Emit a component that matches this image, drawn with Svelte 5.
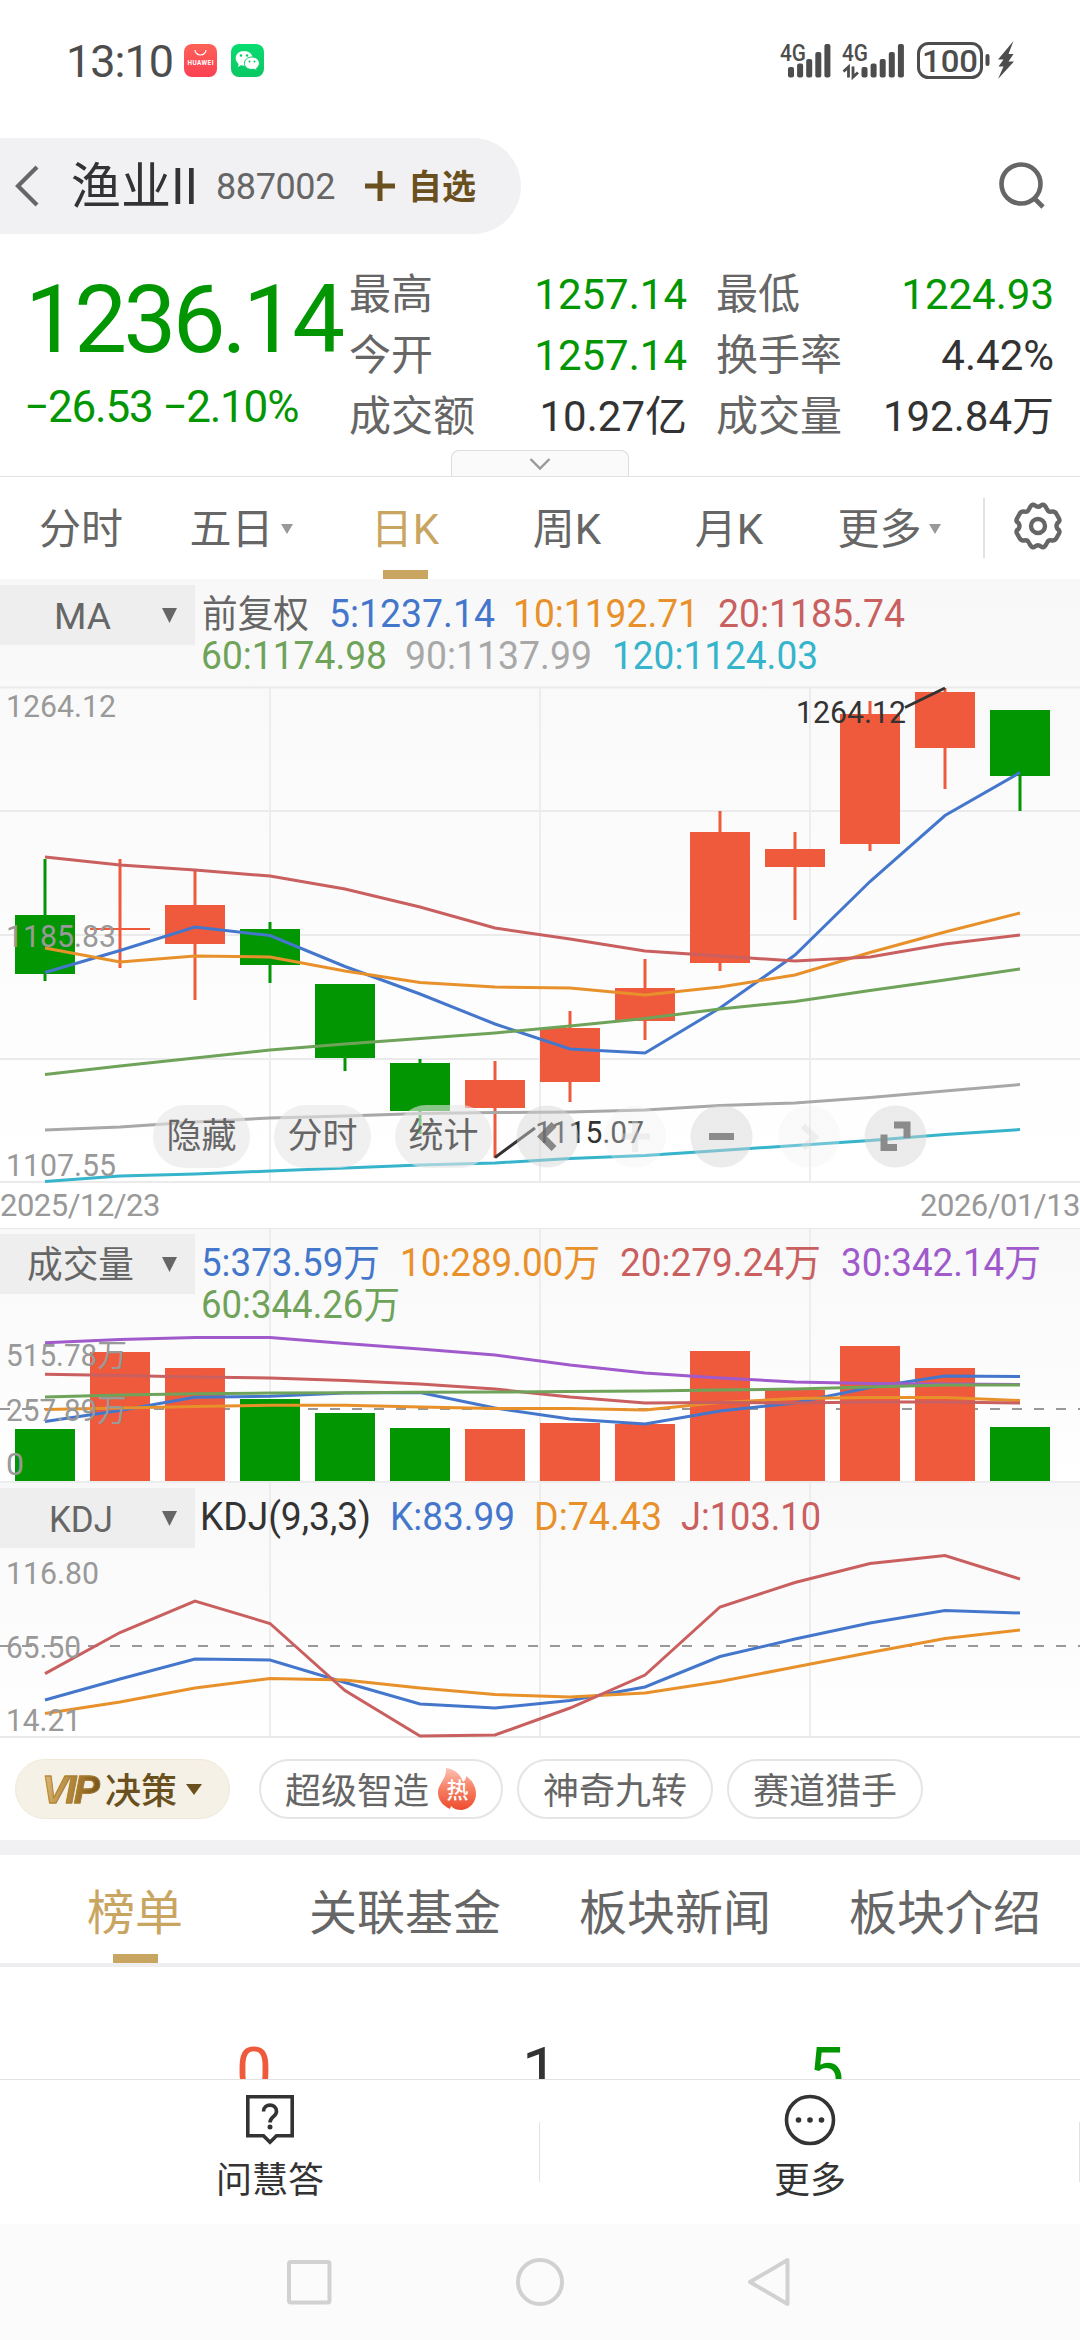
<script>
const UP = '#ef5a3c';
const DOWN = '#029702';
const BLUE = '#4477cc';
const ORANGE = '#e8912b';
const RED = '#c95f5f';
const GREEN = '#6fa35a';
const GRAY = '#a8a8a8';
const CYAN = '#35b4cb';
const PURPLE = '#a05acb';

const stats = [
  { label: '最高', value: '1257.14', down: true },
  { label: '最低', value: '1224.93', down: true },
  { label: '今开', value: '1257.14', down: true },
  { label: '换手率', value: '4.42%' },
  { label: '成交额', value: '10.27亿' },
  { label: '成交量', value: '192.84万' }
];

const periods = [
  { name: '分时' },
  { name: '五日', more: true },
  { name: '日K', active: true },
  { name: '周K' },
  { name: '月K' },
  { name: '更多', more: true }
];

// [high, open/close top, open/close bottom, low, rising]
const candles = [
  [859, 915, 974, 981, false],
  [859, 928, 930, 968, true],
  [870, 905, 944, 1000, true],
  [922, 929, 965, 983, false],
  [984, 984, 1058, 1071, false],
  [1059, 1063, 1111, 1134, false],
  [1061, 1080, 1108, 1158, true],
  [1011, 1028, 1082, 1102, true],
  [959, 988, 1021, 1040, true],
  [811, 832, 963, 971, true],
  [832, 849, 867, 920, true],
  [701, 714, 844, 851, true],
  [688, 692, 748, 789, true],
  [710, 710, 776, 811, false]
];

const maLines = [
  { color: BLUE, ys: [972.5, 950.5, 927, 935.5, 966.5, 994, 1024, 1049, 1053, 1008, 955, 881.5, 815.5, 772.5] },
  { color: ORANGE, ys: [948, 962, 956, 957, 971, 982.5, 987, 988, 995, 987, 975, 952.5, 932, 913] },
  { color: RED, ys: [857, 865, 870, 876, 889, 907, 928, 939, 951, 956, 961, 957, 944, 935] },
  { color: GREEN, ys: [1074.5, 1066, 1058, 1050, 1044, 1038.5, 1033, 1026, 1018.5, 1009, 1001.5, 990.5, 980, 969] },
  { color: GRAY, ys: [1130, 1127, 1122, 1118, 1116, 1113.5, 1112.5, 1112, 1110, 1105.5, 1103, 1097.5, 1091, 1084.5] },
  { color: CYAN, ys: [1181.5, 1176, 1174, 1171, 1168, 1165, 1163, 1158.5, 1155.5, 1150.5, 1145.5, 1140.5, 1134.5, 1129.5] }
];

const volumes = [1429, 1352, 1368, 1399, 1413, 1428, 1429, 1423, 1424, 1351, 1390, 1346, 1368, 1427];

const volLines = [
  { color: BLUE, ys: [1421.5, 1410.5, 1397.3, 1396.3, 1393, 1392.5, 1408, 1419, 1424, 1411, 1403, 1387.5, 1376, 1376.6] },
  { color: ORANGE, ys: [1409.5, 1408, 1406.5, 1405.3, 1405.3, 1407, 1408.5, 1408.5, 1410, 1402.5, 1398.5, 1397.5, 1397.5, 1400.5] },
  { color: RED, ys: [1374.3, 1375.5, 1377, 1378, 1380.5, 1384, 1389, 1397, 1403, 1402.5, 1403, 1402, 1402, 1403] },
  { color: PURPLE, ys: [1342.7, 1339.5, 1337.5, 1337.5, 1343.5, 1349, 1355, 1365, 1373, 1378, 1382, 1383.5, 1384, 1384.6] },
  { color: GREEN, ys: [1397, 1395, 1393.7, 1393, 1392.7, 1392.3, 1392, 1391.5, 1391, 1390, 1389, 1387, 1385, 1385] }
];

const kdjLines = [
  { color: BLUE, ys: [1700, 1679, 1659, 1660, 1682.5, 1704, 1708, 1700.5, 1687, 1656.5, 1639, 1623, 1610.5, 1613] },
  { color: ORANGE, ys: [1713.5, 1702, 1688, 1678.5, 1680, 1688, 1694.5, 1697, 1693, 1681.5, 1667, 1652.5, 1638.5, 1630] },
  { color: RED, ys: [1673.6, 1632.5, 1601, 1623.5, 1690.5, 1736, 1735, 1708, 1675, 1607, 1582.5, 1563.5, 1555.5, 1579] }
];

// text, x, baseline, width, color
const maLegend = [
  ['前复权', 202, 627, 107, '#666'],
  ['5:1237.14', 329, 627, 166, BLUE],
  ['10:1192.71', 513, 627, 186, ORANGE],
  ['20:1185.74', 718, 627, 187, RED],
  ['60:1174.98', 201, 669, 186, GREEN],
  ['90:1137.99', 405, 669, 187, GRAY],
  ['120:1124.03', 612, 669, 206, CYAN]
];

const volLegend = [
  ['5:373.59万', 201, 1276, 179, BLUE],
  ['10:289.00万', 400, 1276, 200, ORANGE],
  ['20:279.24万', 620, 1276, 201, RED],
  ['30:342.14万', 841, 1276, 200, PURPLE],
  ['60:344.26万', 201, 1318, 199, GREEN]
];

const kdjLegend = [
  ['KDJ(9,3,3)', 200, 1530, 171, '#333'],
  ['K:83.99', 390, 1530, 125, BLUE],
  ['D:74.43', 534, 1530, 128, ORANGE],
  ['J:103.10', 681, 1530, 140, RED]
];

const tools = ['隐藏', '分时', '统计'];
const chips = [{ name: '超级智造', hot: true }, { name: '神奇九转' }, { name: '赛道猎手' }];
const sections = ['榜单', '关联基金', '板块新闻', '板块介绍'];

const cx = (i) => 45 + i * 75;
const toPoints = (ys) => ys.map((y, i) => `${cx(i)},${y}`).join(' ');
</script>

{#snippet legend(items)}
  {#each items as [text, x, y, width, color]}
    <text {x} {y} fill={color} font-size="38" textLength={width} lengthAdjust="spacingAndGlyphs">{text}</text>
  {/each}
{/snippet}

{#snippet curves(lines)}
  {#each lines as line}
    <polyline points={toPoints(line.ys)} fill="none" stroke={line.color} stroke-width="3" />
  {/each}
{/snippet}

{#snippet axis(text, y, width, x = 6)}
  <text {x} {y} fill="#999" font-size="31" textLength={width} lengthAdjust="spacingAndGlyphs">{text}</text>
{/snippet}

{#snippet picker(name, y, x, width)}
  <rect x="0" {y} width="195" height="60" fill="#eee" />
  <text {x} y={y + 44} fill="#666" font-size="37" textLength={width} lengthAdjust="spacingAndGlyphs">{name}</text>
  <path d={`M162 ${y + 23}h15l-7.5 15z`} fill="#666" />
{/snippet}

{#snippet columns(top, bottom)}
  {#each [270, 540, 810] as x}
    <line x1={x} x2={x} y1={top} y2={bottom} stroke="#ededed" stroke-width="2" />
  {/each}
{/snippet}

<div class="screen">
  <div class="status">
    <span class="clock">13:10</span>
    <svg class="badges" viewBox="0 0 80 34" width="80" height="34">
      <defs>
        <linearGradient id="hw" x2="0" y2="1"><stop stop-color="#fd6257" /><stop offset="1" stop-color="#fb4154" /></linearGradient>
        <linearGradient id="wx" x2="0" y2="1"><stop stop-color="#07dd70" /><stop offset="1" stop-color="#0bc763" /></linearGradient>
      </defs>
      <rect width="33" height="33" rx="8" fill="url(#hw)" />
      <path d="M11 6a5.5 5 0 0 0 11 0" fill="none" stroke="#fff" stroke-width="1.2" />
      <text x="3.5" y="21" font-size="6.4" font-weight="700" fill="#fff" textLength="26">HUAWEI</text>
      <rect x="47" width="33" height="33" rx="8" fill="url(#wx)" />
      <path d="M60 7c-5 0-8.300 3.200-8.300 7.300 0 2.400 1.200 4.400 3 5.700l-.8 3 3-1.700c1 .3 2 .4 3.100.4 5 0 8.700-3.300 8.700-7.400S65 7 60 7z" fill="#fff" />
      <path d="M68 13c-4.600 0-7.600 2.900-7.600 6.300s3 6.200 7.600 6.200l2.300-.3 2.800 1.600-.6-2.600c1.800-1.200 2.900-2.900 2.900-4.900 0-3.400-3-6.300-7.400-6.300z" fill="#fff" stroke="#0acd67" stroke-width="1" />
      <circle cx="57" cy="11.500" r="1.200" fill="#0c6" /><circle cx="63" cy="11.500" r="1.200" fill="#0c6" />
      <circle cx="65.500" cy="17.500" r="1" fill="#0c6" /><circle cx="70.500" cy="17.500" r="1" fill="#0c6" />
    </svg>
    <svg class="signals" viewBox="776 38 240 44" width="240" height="44" fill="#4d4d4d">
      {#each [0, 73.500] as dx, n}
        <text x={778 + n * 62} y="59.500" font-size="23" font-weight="500" textLength="26" lengthAdjust="spacingAndGlyphs">4G</text>
        {#each [66, 62.500, 58, 51, 43] as top, i}
          <rect x={786 + dx + i * 9.100} y={top} width="6" height={76.500 - top} rx="2" />
        {/each}
      {/each}
      <path d="M841.500 70.500l5-4.500v10.500M856 71.500l-5 4.500v-10.500" fill="none" stroke="#4d4d4d" stroke-width="2.800" />
      <rect x="916.500" y="42.500" width="63" height="34" rx="10" fill="none" stroke="#4d4d4d" stroke-width="3" />
      <text x="920" y="71" font-size="32" font-weight="500" textLength="56" lengthAdjust="spacingAndGlyphs">100</text>
      <rect x="983.500" y="53" width="4" height="12" rx="2" />
      <path d="M1011.500 40l-15.500 18.500h5.500l-5 7h5L996 78l16-17.500h-5.500l5-7.500h-5z" />
    </svg>
  </div>

  <header>
    <div class="title-pill">
      <svg class="back" viewBox="0 0 26 42" width="26" height="42"><path d="M23 2L4 21l19 19" fill="none" stroke="#666" stroke-width="4.200" /></svg>
      <h1>渔业II</h1>
      <span class="code">887002</span>
      <svg class="plus" viewBox="0 0 32 32" width="32" height="32"><path d="M16 1v30M1 16h30" stroke="#69501e" stroke-width="5" /></svg>
      <span class="follow">自选</span>
    </div>
    <svg class="search" viewBox="0 0 50 50" width="50" height="50" fill="none" stroke="#666" stroke-width="4.600"><circle cx="23" cy="23" r="19.500" /><path d="M36 37l9 9" /></svg>
  </header>

  <div class="quote">
    <div class="price">
      <strong>1236.14</strong>
      <span>−26.53 −2.10%</span>
    </div>
    <div class="stats">
      {#each stats as s}
        <div class="stat"><span>{s.label}</span><b class:down={s.down}>{s.value}</b></div>
      {/each}
    </div>
    <div class="handle">
      <svg viewBox="0 0 22 14" width="22" height="14"><path d="M1.500 2l9.500 9.500L20.500 2" fill="none" stroke="#999" stroke-width="2.400" /></svg>
    </div>
  </div>

  <nav class="periods">
    {#each periods as p}
      <div class="period" class:active={p.active}>
        <span>{p.name}</span>
        {#if p.more}<i></i>{/if}
      </div>
    {/each}
    <div class="settings">
      <svg viewBox="0 0 50 50" width="50" height="50" fill="none" stroke="#666" stroke-width="4.400" stroke-linejoin="round">
        <path d="M17.500 5.500Q19.500 2.500 22 4.500Q25 7 28 4.500Q30.500 2.500 32.500 5.500L34.500 9Q35.500 11 38 10.700Q42 10 43.500 13L46 17.500Q47.500 20.500 44.500 22Q42.500 25 44.500 28Q47.500 29.500 46 32.500L43.500 37Q42 40 38 39.300Q35.500 39 34.500 41L32.500 44.500Q30.500 47.500 28 45.500Q25 43 22 45.500Q19.500 47.500 17.500 44.500L15.500 41Q14.500 39 12 39.300Q8 40 6.500 37L4 32.500Q2.500 29.500 5.500 28Q7.500 25 5.500 22Q2.500 20.500 4 17.500L6.500 13Q8 10 12 10.700Q14.500 11 15.500 9Z" />
        <circle cx="25" cy="25" r="7" />
      </svg>
    </div>
  </nav>

  <div class="chart">
    <svg class="ma-panel" viewBox="0 579 1080 604" width="1080" height="604">
      <defs>
        <linearGradient id="fade" x2="0" y2="1"><stop stop-color="#f8f8f8" /><stop offset="1" stop-color="#fff" /></linearGradient>
      </defs>
      <rect x="0" y="579" width="1080" height="604" fill="url(#fade)" />
      {@render picker('MA', 585, 54, 57)}
      {@render legend(maLegend)}
      {#each [687.5, 811, 935, 1059, 1182] as y}
        <line x1="0" x2="1080" y1={y} y2={y} stroke="#ebebeb" stroke-width="2" />
      {/each}
      {@render columns(688, 1182)}
      {#each candles as [high, top, bottom, low, rising], i}
        <line x1={cx(i)} x2={cx(i)} y1={high} y2={low} stroke={rising ? UP : DOWN} stroke-width="3" />
        <rect x={cx(i) - 30} y={top} width="60" height={bottom - top} fill={rising ? UP : DOWN} />
      {/each}
      {@render curves(maLines)}
      {@render axis('1264.12', 717, 110)}
      {@render axis('1185.83', 947, 110)}
      {@render axis('1107.55', 1176, 110)}
      <text x="796" y="723" fill="#333" font-size="31" textLength="110" lengthAdjust="spacingAndGlyphs">1264.12</text>
      <text x="535" y="1143" fill="#333" font-size="31" textLength="109" lengthAdjust="spacingAndGlyphs">1115.07</text>
      <path d="M905 707.500L945 688M495 1157.500L535 1128" stroke="#333" stroke-width="3" />
    </svg>
    <div class="tools">
      {#each tools as t}<span class="tool">{t}</span>{/each}
      <svg viewBox="516 1105 411 63" width="411" height="63" fill="none" stroke="#8b8b8b" stroke-width="7">
        <g fill="#d4d4d4" fill-opacity=".45" stroke="none">
          <circle cx="547.500" cy="1136.500" r="31" />
          <circle cx="721.500" cy="1136.500" r="31" />
          <circle cx="895.500" cy="1136.500" r="31" />
        </g>
        <g fill="#f0f0f0" fill-opacity=".3" stroke="none">
          <circle cx="635" cy="1136.500" r="31" />
          <circle cx="809" cy="1136.500" r="31" />
        </g>
        <path d="M554 1124.500l-12 12 12 12" stroke="#666" stroke-opacity=".75" />
        <path d="M709 1136.500h25M894 1125h13v13M897 1147.500h-13v-13" />
        <path d="M635 1121v31M621 1136.500h29M803 1126l12 11-12 11" stroke="#ddd" stroke-opacity=".4" stroke-width="6" />
      </svg>
    </div>
    <div class="dates"><span>2025/12/23</span><span>2026/01/13</span></div>
    <svg viewBox="0 1228 1080 255" width="1080" height="255">
      <rect x="0" y="1228" width="1080" height="255" fill="url(#fade)" />
      <line x1="0" x2="1080" y1="1228.500" y2="1228.500" stroke="#e6e6e6" />
      {@render columns(1229, 1481)}
      {@render picker('成交量', 1234, 27, 107)}
      {@render legend(volLegend)}
      <line x1="0" x2="1080" y1="1409" y2="1409" stroke="#999" stroke-width="2" stroke-dasharray="10 12" />
      {#each volumes as top, i}
        <rect x={cx(i) - 30} y={top} width="60" height={1481 - top} fill={candles[i][4] ? UP : DOWN} />
      {/each}
      {@render curves(volLines)}
      {@render axis('515.78万', 1366, 121)}
      {@render axis('257.89万', 1421, 121)}
      {@render axis('0', 1475, 18)}
      <line x1="0" x2="1080" y1="1482" y2="1482" stroke="#ededed" stroke-width="2" />
    </svg>
    <svg viewBox="0 1483 1080 255" width="1080" height="255">
      <rect x="0" y="1483" width="1080" height="255" fill="url(#fade)" />
      {@render columns(1483, 1737)}
      {@render picker('KDJ', 1488, 49, 64)}
      {@render legend(kdjLegend)}
      <line x1="0" x2="1080" y1="1646" y2="1646" stroke="#999" stroke-width="2" stroke-dasharray="10 12" />
      <line x1="0" x2="1080" y1="1737" y2="1737" stroke="#e9e9e9" stroke-width="2" />
      {@render curves(kdjLines)}
      {@render axis('116.80', 1584, 93)}
      {@render axis('65.50', 1658, 75)}
      {@render axis('14.21', 1731, 75)}
    </svg>
  </div>

  <div class="chips">
    <div class="vip"><em>VIP</em><span>决策</span><i></i></div>
    {#each chips as c}
      <div class="chip">
        <span>{c.name}</span>
        {#if c.hot}
          <svg viewBox="0 0 40 44" width="40" height="44">
            <defs><linearGradient id="flame" x2="0" y2="1"><stop stop-color="#fcc3b4" /><stop offset=".45" stop-color="#f78469" /><stop offset="1" stop-color="#ee4b2c" /></linearGradient></defs>
            <path d="M9 1C18 2 24 8 26 15c2-1 3-3 3-6 7 5 10 11 10 18 0 8-6 15-14 16-5 0-8-1-11-4l-1 3C5 38 1 33 1 25 1 17 10 12 9 1z" fill="url(#flame)" />
            <text x="9.500" y="31" font-size="22" font-weight="500" fill="#fff">热</text>
          </svg>
        {/if}
      </div>
    {/each}
  </div>

  <nav class="sections">
    {#each sections as name, i}<div class="section" class:active={i === 0}>{name}</div>{/each}
  </nav>

  <div class="counts">
    <span class="up">0</span><span>1</span><span class="down">5</span>
  </div>

  <footer>
    <div class="action">
      <svg viewBox="0 0 50 52" width="50" height="52" fill="none" stroke="#333" stroke-width="3.600">
        <path d="M2.800 2.800h44.400v39H31.500L25 48.300l-6.500-6.500H2.800z" />
        <path d="M18.500 17.500c0-8.500 13-8.500 13 0 0 5-6.500 5.500-6.500 11" /><circle cx="25" cy="33" r="2.500" fill="#333" stroke="none" />
      </svg>
      <span>问慧答</span>
    </div>
    <div class="action">
      <svg viewBox="0 0 52 52" width="52" height="52">
        <circle cx="26" cy="26" r="23.500" fill="none" stroke="#333" stroke-width="3.600" />
        <g fill="#333"><circle cx="14.500" cy="26" r="2.800" /><circle cx="26" cy="26" r="2.800" /><circle cx="37.500" cy="26" r="2.800" /></g>
      </svg>
      <span>更多</span>
    </div>
  </footer>

  <div class="system">
    <svg viewBox="0 2224 1080 116" width="1080" height="116" fill="none" stroke="#d1d1d1" stroke-width="4" stroke-linejoin="round">
      <rect x="289" y="2262" width="40.500" height="40.500" rx="2" />
      <circle cx="540" cy="2282" r="22" />
      <path d="M787.500 2260v44L750 2282z" />
    </svg>
  </div>
</div>

<style>
:global(body) {
  margin: 0;
  background: #fff;
}

.screen {
  width: 1080px;
  height: 2340px;
  overflow: hidden;
  display: flex;
  flex-direction: column;
  background: #fff;
  color: #333;
  font-family: Roboto, "Noto Sans CJK SC", sans-serif;
}

.screen > * {
  flex: none;
}

svg {
  display: block;
}

.status {
  height: 138px;
  box-sizing: border-box;
  padding: 39px 62px 55px 66px;
  display: flex;
  align-items: center;
}

.clock {
  width: 118px;
  padding-top: 2px;
  color: #4d4d4d;
  font-size: 45px;
  line-height: 44px;
  letter-spacing: -1px;
}

.signals {
  margin-left: auto;
}

header {
  height: 96px;
  display: flex;
  justify-content: space-between;
  align-items: center;
  padding-right: 32px;
}

.title-pill {
  width: 521px;
  height: 96px;
  box-sizing: border-box;
  padding-left: 14px;
  display: flex;
  align-items: center;
  background: #f1f1f4;
  border-radius: 0 48px 48px 0;
}

h1 {
  width: 145px;
  margin: 0 0 0 31px;
  padding-top: 2px;
  font-size: 50px;
  font-weight: 400;
  line-height: 94px;
  white-space: nowrap;
}

.code {
  width: 148px;
  padding-top: 2px;
  color: #666;
  font-size: 36px;
  letter-spacing: -.4px;
}

.follow {
  margin-left: 12px;
  padding-bottom: 3px;
  color: #69501e;
  font-size: 34px;
  font-weight: 700;
}

.quote {
  position: relative;
  height: 242px;
  display: flex;
  border-bottom: 1px solid #e2e2e2;
}

.price {
  width: 349px;
  padding-top: 28px;
  display: flex;
  flex-direction: column;
  color: #029702;
  white-space: nowrap;
}

.price strong {
  padding-left: 25px;
  font-size: 94px;
  font-weight: 400;
  line-height: 116px;
  letter-spacing: -3.6px;
}

.price span {
  padding-left: 24px;
  font-size: 44px;
  line-height: 58px;
  letter-spacing: -1.2px;
}

.stats {
  width: 705px;
  padding-top: 30px;
  display: grid;
  grid-template-columns: 338px 338px;
  grid-auto-rows: 61px;
  column-gap: 29px;
}

.stat {
  display: flex;
  justify-content: space-between;
  font-size: 42px;
  line-height: 61px;
}

.stat span {
  color: #666;
}

.stat b {
  font-weight: 400;
}

.down {
  color: #029702;
}

.up {
  color: #ef5a3c;
}

.handle {
  position: absolute;
  left: 451px;
  bottom: 0;
  width: 176px;
  height: 25px;
  display: flex;
  align-items: center;
  justify-content: center;
  background: #fafafa;
  border: 1px solid #ddd;
  border-bottom: 0;
  border-radius: 8px 8px 0 0;
}

.periods {
  height: 102px;
  display: flex;
}

.period {
  position: relative;
  width: 162px;
  display: flex;
  align-items: center;
  justify-content: center;
  color: #666;
  font-size: 42px;
  line-height: 98px;
}

.period span {
  padding-top: 4px;
}

.period i {
  margin: 2px 4px 0 7px;
  border: 6px solid transparent;
  border-top: 10px solid #999;
  border-bottom: 0;
}

.period.active,
.section.active {
  color: #c9a562;
}

.period.active::after,
.section.active::after {
  content: "";
  position: absolute;
  bottom: 0;
  width: 45px;
  height: 9px;
  background: #c9a562;
}

.settings {
  width: 95px;
  height: 60px;
  margin: 21px 0 0 11px;
  display: flex;
  align-items: center;
  justify-content: center;
  box-sizing: border-box;
  padding: 0 0 5px 13px;
  border-left: 2px solid #e3e3e3;
}

.chart {
  position: relative;
  height: 1159px;
}

.tools {
  position: absolute;
  left: 153px;
  top: 526px;
  display: flex;
  gap: 24px;
}

.tool {
  width: 97px;
  height: 63px;
  border-radius: 32px;
  background: rgba(230, 230, 230, .6);
  color: #666;
  font-size: 35px;
  line-height: 64px;
  text-align: center;
}

.dates {
  height: 45px;
  display: flex;
  justify-content: space-between;
  color: #999;
  font-size: 31px;
  line-height: 46px;
  letter-spacing: -.5px;
  background: #fff;
}

.chips {
  height: 60px;
  padding: 21px 0 21px 15px;
  display: flex;
  gap: 14px;
}

.vip {
  width: 215px;
  height: 60px;
  margin-right: 15px;
  box-sizing: border-box;
  padding-left: 26px;
  display: flex;
  align-items: center;
  border: 1px solid #f1e9da;
  border-radius: 30px;
  background: #f6f1e6;
  color: #69501e;
  font-size: 36px;
  font-weight: 500;
}

.vip em {
  width: 63px;
  padding-top: 2px;
  background: linear-gradient(100deg, #e5bd78, #a87c30 55%, #5f430e);
  background-clip: text;
  color: transparent;
  font-family: "Liberation Sans", Arial, sans-serif;
  font-size: 39px;
  font-weight: 700;
  letter-spacing: -2.5px;
  -webkit-text-stroke: .8px #a87c30;
}

.vip span {
  font-size: 36px;
  padding-bottom: 2px;
}

.vip i {
  margin-left: 9px;
  border: 8px solid transparent;
  border-top: 11px solid #69501e;
  border-bottom: 0;
}

.chip {
  height: 60px;
  box-sizing: border-box;
  padding: 0 24px;
  display: flex;
  align-items: center;
  gap: 8px;
  border: 2px solid #e5e5e5;
  border-radius: 30px;
  color: #666;
  font-size: 36px;
  white-space: nowrap;
}

.chip span {
  padding-bottom: 2px;
}

.sections {
  height: 108px;
  display: flex;
  border-top: 15px solid #f1f1f4;
  border-bottom: 4px solid #eeeef0;
}

.section {
  position: relative;
  width: 270px;
  display: flex;
  justify-content: center;
  color: #666;
  font-size: 48px;
  line-height: 117px;
}

.counts {
  height: 112px;
  overflow: hidden;
  box-sizing: border-box;
  padding: 68px 111px 0;
  display: flex;
  font-size: 64px;
  line-height: 74px;
}

.counts span {
  width: 286px;
  text-align: center;
}

footer {
  height: 144px;
  display: flex;
  border-top: 1px solid #e2e2e2;
}

.action {
  position: relative;
  width: 540px;
  padding-top: 14px;
  display: flex;
  flex-direction: column;
  align-items: center;
  font-size: 36px;
  line-height: 71px;
}

.action::after {
  content: "";
  position: absolute;
  right: 0;
  top: 42px;
  width: 1px;
  height: 60px;
  background: #e2e2e2;
}

.system {
  height: 116px;
  background: #fbfbfb;
}
</style>
